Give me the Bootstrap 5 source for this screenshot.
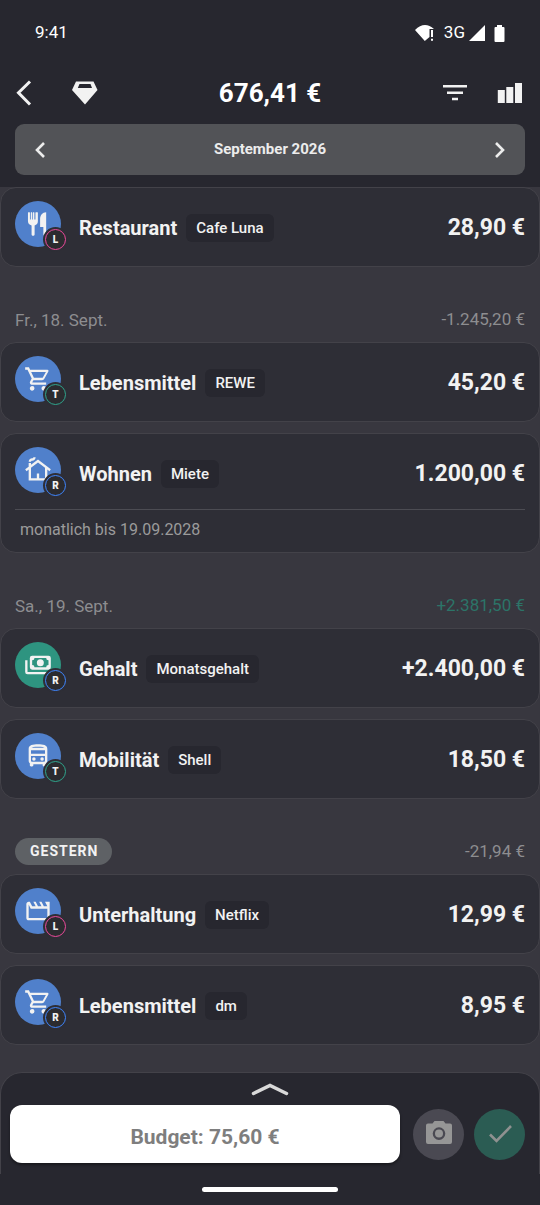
<!DOCTYPE html>
<html lang="de" data-bs-theme="dark">
<head>
<meta charset="utf-8">
<meta name="viewport" content="width=device-width, initial-scale=1">
<title>Buchungen</title>
<link rel="stylesheet" href="https://cdn.jsdelivr.net/npm/bootstrap@5.3.0/dist/css/bootstrap.min.css">
<style>
  :root { --bar: #27272f; --list: #38373f; --tile: #2e2e36; --line: #434249; --ink: #f2f2f2; --muted: #8d8d90; --edge: 15px; }
  body { font-family: Roboto, "Liberation Sans", sans-serif; background: var(--list); color: var(--ink); line-height: 1.5; }
  button { color: inherit; }
  svg { display: block; flex: none; }
  .app-head { background: var(--bar); padding-bottom: 12px; z-index: 5; }
  .status { height: 66px; padding: 0 35px; font-size: 17px; color: #fff; }
  .signals { gap: 9px; }
  .toolbar { display: grid; grid-template-columns: 1fr auto 1fr; height: 54px; padding: 0 var(--edge); }
  .toolbar h1 { font-size: 26px; font-weight: 700; line-height: 32px; }
  .tools-left { gap: 38px; }
  .plain { background: none; border: 0; padding: 0; }
  .month { margin: 4px var(--edge) 0; height: 51px; border-radius: 9px; background: #525357; padding: 0 17px; font-size: 15px; font-weight: 700; color: #ececec; }
  .day { height: 75px; padding: 30px var(--edge) 0; font-size: 17px; color: var(--muted); }
  .day h2 { font-size: 17px; font-weight: 400; line-height: 24px; color: inherit; }
  .plus { color: #2c7468; }
  .day .pill { background: #5e6165; color: var(--ink); font-size: 14px; font-weight: 700; letter-spacing: 1px; line-height: 27px; padding: 0 14px 0 15px; }
  .tiles { display: grid; gap: 11px; }
  .entry { background: var(--tile); border: 1px solid var(--line); border-radius: 16px; padding: 0 14px; }
  .entry-row { height: 78px; gap: 13px; padding-top: 13px; line-height: 28px; }
  .entry-row.above-note { height: 75px; }
  .ava { width: 51px; height: 49px; flex: none; }
  .disc { width: 46px; height: 46px; border-radius: 50%; background: #5080cb; }
  .disc.income { background: #2e9480; }
  .who { right: 0; bottom: 0; width: 21px; height: 21px; border-radius: 50%; border: 1px solid; background: #2b2b2f; box-shadow: 0 0 0 2px var(--tile); font-size: 10px; line-height: 19px; font-weight: 700; text-align: center; }
  .who b { color: var(--ink); }
  .who-l { border-color: #ee4a9c; } .who-t { border-color: #2fa58d; } .who-r { border-color: #3f86ff; }
  .label { gap: 9px; margin-top: 13px; }
  .cat { font-size: 20px; font-weight: 700; }
  .tag { background: var(--bar); border-radius: 6px; padding: 0 10px; font-size: 15px; font-weight: 500; }
  .sum { font-size: 23px; font-weight: 700; margin-top: 13px; }
  .repeat { border-top: 1px solid #4c4c53; padding: 0 5px 3px; font-size: 16px; line-height: 39px; color: #9b9b9b; }
  .sheet { background: var(--bar); }
  .sheet-top { border: 1px solid var(--line); border-bottom: 0; border-radius: 22px 22px 0 0; }
  .grip { height: 32px; }
  .actions { gap: 10px; padding: 0 14px 11px 9px; }
  .budget { height: 58px; border-radius: 12px; background: #fff; color: #7e7e7e; font-size: 21px; font-weight: 700; padding: 14px 0 6px; margin-right: 3px; box-shadow: 0 2px 3px #0006; }
  .budget:hover { background: #fff; color: #7e7e7e; }
  .round { width: 51px; height: 51px; border-radius: 50%; border: 0; background: #4a4952; padding: 0; flex: none; }
  .round.ok { background: #2b5c53; }
  .gesture { height: 31px; }
  .gesture span { width: 136px; height: 5px; background: #fff; }
</style>
</head>
<body>
<svg width="0" height="0" class="position-absolute" aria-hidden="true">
  <symbol id="cart" viewBox="0 0 24 24"><path d="M17,18A2,2 0 0,1 19,20A2,2 0 0,1 17,22C15.89,22 15,21.1 15,20C15,18.89 15.89,18 17,18M1,2H4.27L5.21,4H20A1,1 0 0,1 21,5C21,5.17 20.95,5.34 20.88,5.5L17.3,11.97C16.96,12.58 16.3,13 15.55,13H8.1L7.2,14.63L7.17,14.75A0.25,0.25 0 0,0 7.42,15H19V17H7C5.89,17 5,16.1 5,15C5,14.65 5.09,14.32 5.24,14.04L6.6,11.59L3,4H1V2M7,18A2,2 0 0,1 9,20A2,2 0 0,1 7,22C5.89,22 5,21.1 5,20C5,18.89 5.89,18 7,18M16,11L18.78,6H6.14L8.5,11H16Z"/></symbol>
  <symbol id="food" viewBox="0 0 24 24"><path d="M3.4 2.3C3.4 1.8 5.1 1.8 5.1 2.3V8.2H5.8V2.3C5.8 1.8 7 1.8 7 2.3V8.2H7.2H7.6V2.3C7.6 1.8 8.9 1.8 8.9 2.3V8.2H9.8V2.3C9.8 1.8 11.9 1.8 11.9 2.3V9.5C11.9 11.6 10.9 12.8 9.1 13.2V21C9.1 22.4 6.5 22.4 6.5 21V13.2C4.6 12.8 3.4 11.6 3.4 9.5ZM19 2V21C19 22.4 16.6 22.4 16.6 21V14.6H13.8V8C13.8 4.600 15.8 2 19 2Z"/></symbol>
  <symbol id="house" viewBox="0 0 24 24"><path d="M12,3L6,7.58V6H4v3.110L1,11.4l1.210,1.590L4,11.620V21h16v-9.380l1.790,1.360L23,11.4L12,3z M18,19h-5v-4h-2v4H6v-8.9l6-4.580l6,4.580V19z M10,1c0,1.660-1.340,3-3,3C6.450,4,6,4.450,6,5H4c0-1.660,1.340-3,3-3c.55,0,1-.45,1-1H10z"/></symbol>
  <symbol id="cash" viewBox="0 0 24 24"><path fill-rule="evenodd" d="M7 4H21A2 2 0 0 1 23 6V14A2 2 0 0 1 21 16H7A2 2 0 0 1 5 14V6A2 2 0 0 1 7 4ZM9 6A2 2 0 0 1 7 8V12A2 2 0 0 1 9 14H19A2 2 0 0 1 21 12V8A2 2 0 0 1 19 6ZM14 7A3 3 0 0 1 14 13A3 3 0 0 1 14 7ZM1 8H3V18H20V20H3A2 2 0 0 1 1 18Z"/></symbol>
  <symbol id="bus" viewBox="0 0 24 24"><path d="M12 2c-4.420 0-8 .5-8 4v10c0 .88.39 1.670 1 2.220V20c0 .55.45 1 1 1h1c.55 0 1-.45 1-1v-1h8v1c0 .55.45 1 1 1h1c.55 0 1-.45 1-1v-1.780c.61-.55 1-1.340 1-2.220V6c0-3.500-3.580-4-8-4zm5.660 2.990H6.340C6.890 4.460 8.310 4 12 4s5.110.46 5.660.99zm.34 2V10H6V6.990h12zm-.34 9.740l-.29.27H6.630l-.29-.27C6.210 16.620 6 16.370 6 16v-4h12v4c0 .37-.21.62-.34.73z"/><circle cx="8.5" cy="14.5" r="1.5"/><circle cx="15.5" cy="14.5" r="1.5"/></symbol>
  <symbol id="film" viewBox="0 0 24 24"><path d="M4 6.470L5.760 10H20v8H4V6.470M22 4h-4l2 4h-3l-2-4h-2l2 4h-3l-2-4H8l2 4H7L5 4H4c-1.100 0-1.990.9-1.990 2L2 18c0 1.100.9 2 2 2h16c1.100 0 2-.9 2-2V4z"/></symbol>
</svg>

<div class="d-flex flex-column min-vh-100">
  <header class="app-head sticky-top">
    <div class="status d-flex align-items-center justify-content-between">
      <span>9:41</span>
      <span class="signals d-flex align-items-center">
        <svg width="20" height="18" viewBox="0 0 20 18" fill="#fff"><path d="M0 6Q9.500-3.500 19 5H14.500V13L9.800 17Z"/><path d="M16 6h2v7h-2zM16 14.700h2v2h-2z"/></svg>
        <span class="d-flex align-items-center gap-1">3G
        <svg width="16" height="16" viewBox="0 0 16 16" fill="#fff"><path d="M16 0V16H0Z"/></svg></span>
        <svg width="11" height="17" viewBox="0 0 11 17" fill="#fff"><path d="M3 0h5v2h1.500q1 0 1 1v13q0 1-1 1h-8q-1 0-1-1V3q0-1 1-1H3z"/></svg>
      </span>
    </div>
    <div class="toolbar align-items-center">
      <div class="tools-left d-flex align-items-center">
        <button class="plain" type="button" aria-label="Zurück"><svg width="18" height="26" viewBox="0 0 18 26" fill="none" stroke="currentColor" stroke-width="3"><path d="M15 1.500L3.500 12.800 15 24.500"/></svg></button>
        <button class="plain" type="button" aria-label="Premium"><svg width="28" height="26" viewBox="0 0 28 26" fill="currentColor"><path fill-rule="evenodd" d="M5 1.500H22.500L26.500 10 14 24.500 1 10ZM8.500 4 6.800 8H21L19.500 4Z"/></svg></button>
      </div>
      <h1 class="m-0">676,41 €</h1>
      <div class="d-flex align-items-center justify-content-end">
        <button class="plain me-4" type="button" aria-label="Filter"><svg width="30" height="24" viewBox="0 0 30 24" fill="currentColor"><path d="M0 4h24v2.500H0zM4 10.500h16v2.500H4zM9 16.800h6v2.500H9z"/></svg></button>
        <button class="plain" type="button" aria-label="Statistik"><svg width="28" height="24" viewBox="0 0 28 24" fill="currentColor"><path d="M.8 9h7v13H.8zM9.300 6h7v16h-7zM18 2h7v20h-7z"/></svg></button>
      </div>
    </div>
    <nav class="month d-flex align-items-center justify-content-between" aria-label="Monat">
      <button class="plain" type="button" aria-label="Voriger Monat"><svg width="16" height="18" viewBox="0 0 16 18" fill="none" stroke="currentColor" stroke-width="2.600"><path d="M12 2L5 9l7 7"/></svg></button>
      <span>September 2026</span>
      <button class="plain" type="button" aria-label="Nächster Monat"><svg width="16" height="18" viewBox="0 0 16 18" fill="none" stroke="currentColor" stroke-width="2.600"><path d="M4 2l7 7-7 7"/></svg></button>
    </nav>
  </header>

  <main class="flex-grow-1 pb-4">
    <section class="tiles">
      <article class="entry"><div class="entry-row d-flex align-items-start">
        <div class="ava position-relative"><div class="disc d-flex align-items-center justify-content-center"><svg width="28" height="28" fill="currentColor"><use href="#food"/></svg></div><span class="who who-l position-absolute"><b>L</b></span></div>
        <div class="label d-flex align-items-center me-auto"><span class="cat">Restaurant</span><span class="tag">Cafe Luna</span></div><span class="sum">28,90 €</span>
      </div></article>
    </section>

    <div class="day d-flex justify-content-between align-items-center"><h2 class="m-0">Fr., 18. Sept.</h2><span>-1.245,20 €</span></div>
    <section class="tiles">
      <article class="entry"><div class="entry-row d-flex align-items-start">
        <div class="ava position-relative"><div class="disc d-flex align-items-center justify-content-center"><svg width="28" height="28" fill="currentColor"><use href="#cart"/></svg></div><span class="who who-t position-absolute"><b>T</b></span></div>
        <div class="label d-flex align-items-center me-auto"><span class="cat">Lebensmittel</span><span class="tag">REWE</span></div><span class="sum">45,20 €</span>
      </div></article>
      <article class="entry"><div class="entry-row above-note d-flex align-items-start">
        <div class="ava position-relative"><div class="disc d-flex align-items-center justify-content-center"><svg width="28" height="28" fill="currentColor"><use href="#house"/></svg></div><span class="who who-r position-absolute"><b>R</b></span></div>
        <div class="label d-flex align-items-center me-auto"><span class="cat">Wohnen</span><span class="tag">Miete</span></div><span class="sum">1.200,00 €</span>
      </div><div class="repeat">monatlich bis 19.09.2028</div></article>
    </section>

    <div class="day d-flex justify-content-between align-items-center"><h2 class="m-0">Sa., 19. Sept.</h2><span class="plus">+2.381,50 €</span></div>
    <section class="tiles">
      <article class="entry"><div class="entry-row d-flex align-items-start">
        <div class="ava position-relative"><div class="disc income d-flex align-items-center justify-content-center"><svg width="28" height="28" fill="currentColor"><use href="#cash"/></svg></div><span class="who who-r position-absolute"><b>R</b></span></div>
        <div class="label d-flex align-items-center me-auto"><span class="cat">Gehalt</span><span class="tag">Monatsgehalt</span></div><span class="sum">+2.400,00 €</span>
      </div></article>
      <article class="entry"><div class="entry-row d-flex align-items-start">
        <div class="ava position-relative"><div class="disc d-flex align-items-center justify-content-center"><svg width="28" height="28" fill="currentColor"><use href="#bus"/></svg></div><span class="who who-t position-absolute"><b>T</b></span></div>
        <div class="label d-flex align-items-center me-auto"><span class="cat">Mobilität</span><span class="tag">Shell</span></div><span class="sum">18,50 €</span>
      </div></article>
    </section>

    <div class="day d-flex justify-content-between align-items-center"><h2 class="pill rounded-pill m-0">GESTERN</h2><span>-21,94 €</span></div>
    <section class="tiles">
      <article class="entry"><div class="entry-row d-flex align-items-start">
        <div class="ava position-relative"><div class="disc d-flex align-items-center justify-content-center"><svg width="28" height="28" fill="currentColor"><use href="#film"/></svg></div><span class="who who-l position-absolute"><b>L</b></span></div>
        <div class="label d-flex align-items-center me-auto"><span class="cat">Unterhaltung</span><span class="tag">Netflix</span></div><span class="sum">12,99 €</span>
      </div></article>
      <article class="entry"><div class="entry-row d-flex align-items-start">
        <div class="ava position-relative"><div class="disc d-flex align-items-center justify-content-center"><svg width="28" height="28" fill="currentColor"><use href="#cart"/></svg></div><span class="who who-r position-absolute"><b>R</b></span></div>
        <div class="label d-flex align-items-center me-auto"><span class="cat">Lebensmittel</span><span class="tag">dm</span></div><span class="sum">8,95 €</span>
      </div></article>
    </section>
  </main>

  <footer class="sticky-bottom">
    <div class="sheet-top sheet">
      <div class="grip d-flex align-items-center justify-content-center"><button class="plain" type="button" aria-label="Aufklappen"><svg width="40" height="16" viewBox="0 0 40 16" fill="none" stroke="#d9d9d9" stroke-width="3.500" stroke-linecap="round"><path d="M3.500 12.500L20 4.500 36.500 12.500"/></svg></button></div>
      <div class="actions d-flex align-items-center">
        <button class="btn budget flex-grow-1" type="button">Budget: 75,60 €</button>
        <button class="round d-flex align-items-center justify-content-center" type="button" aria-label="Beleg fotografieren"><svg width="28" height="26" viewBox="0 0 28 26" fill="#969696"><path fill-rule="evenodd" d="M9.500 0H18.500L20.500 2.500H25Q27 2.500 27 4.500V21Q27 23 25 23H3Q1 23 1 21V4.500Q1 2.500 3 2.500H7.500ZM14 6.300A6.300 6.300 0 0 0 14 18.900 6.300 6.300 0 0 0 14 6.300Z"/><circle cx="14" cy="12.600" r="4"/></svg></button>
        <button class="round ok d-flex align-items-center justify-content-center" type="button" aria-label="Speichern"><svg width="26" height="20" viewBox="0 0 26 20" fill="none" stroke="#8f9190" stroke-width="2.600"><path d="M3 10.500L9.500 17 24 2"/></svg></button>
      </div>
    </div>
    <div class="gesture sheet d-flex align-items-center justify-content-center"><span class="rounded-pill"></span></div>
  </footer>
</div>
<script src="https://cdn.jsdelivr.net/npm/bootstrap@5.3.0/dist/js/bootstrap.bundle.min.js"></script>
</body>
</html>
